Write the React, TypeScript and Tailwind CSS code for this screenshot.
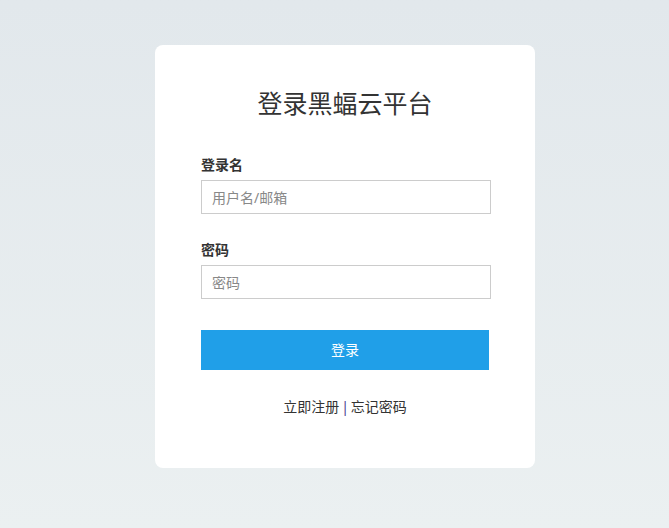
import React from 'react';

const App: React.FC = () => {
  return (
    <div
      className="min-h-[528px] w-full bg-gradient-to-b from-[#e2e8ec] to-[#ebf0f1] pt-[45px] pb-[60px] pl-[21px]"
      style={{ fontFamily: '"Noto Sans", "Noto Sans CJK SC", sans-serif' }}
    >
      <div className="mx-auto w-[380px] rounded-lg bg-white px-[46px] pt-[40px] pb-[51px]">
        {/* Title */}
        <h1 className="text-center text-[25px] leading-[36px] font-normal text-[#333]">
          登录黑蝠云平台
        </h1>

        <form className="mt-[34px]" onSubmit={(e) => e.preventDefault()}>
          <label className="block text-[14px] leading-[20px] font-bold text-[#333]">登录名</label>
          <input
            type="text"
            placeholder="用户名/邮箱"
            className="mt-[5px] block h-[34px] w-[290px] border border-[#ccc] px-[10px] text-[14px] text-[#555] placeholder:text-[#888] outline-none"
          />

          <label className="mt-[26px] block text-[14px] leading-[20px] font-bold text-[#333]">密码</label>
          <input
            type="password"
            placeholder="密码"
            className="mt-[5px] block h-[34px] w-[290px] border border-[#ccc] px-[10px] text-[14px] text-[#555] placeholder:text-[#888] outline-none"
          />

          <button
            type="submit"
            className="mt-[31px] block h-[40px] w-[288px] bg-[#209fe8] text-[14px] leading-[38px] text-white"
          >
            登录
          </button>
        </form>

        <div className="mt-[27px] text-center text-[14px] leading-[20px] text-[#333]">
          <a href="#" className="text-[#333]">立即注册</a>
          <span className="mx-[2px] text-[#4b3f8f]">|</span>
          <a href="#" className="text-[#333]">忘记密码</a>
        </div>
      </div>
    </div>
  );
};

export default App;
